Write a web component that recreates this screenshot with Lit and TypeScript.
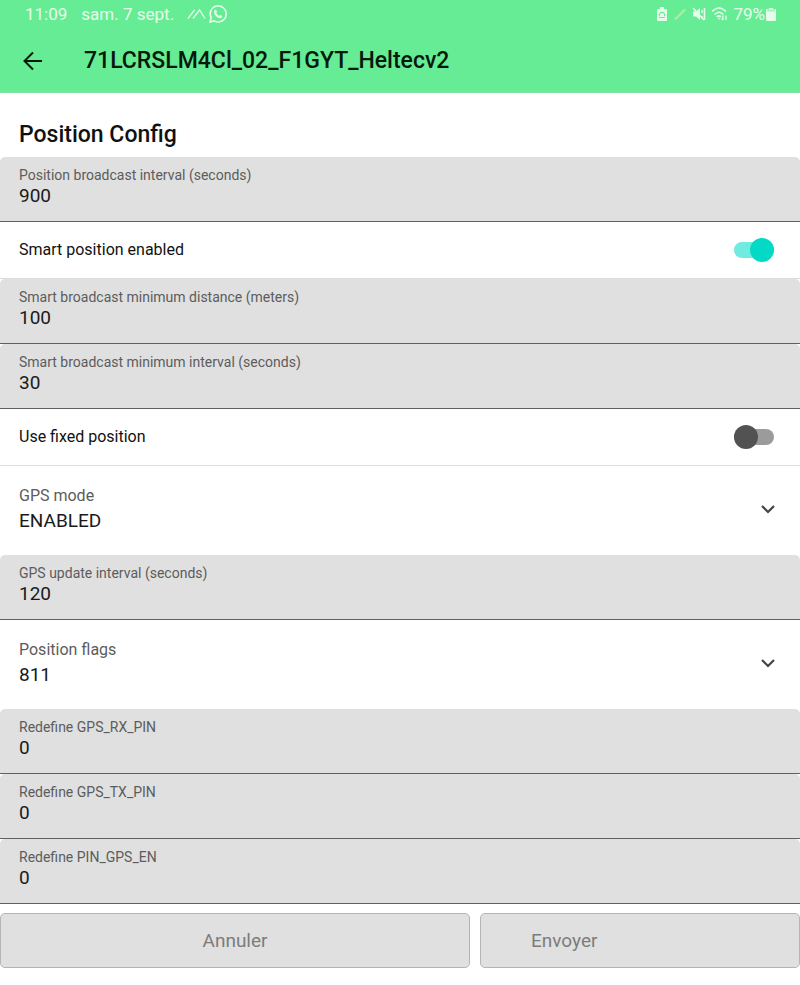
import { LitElement, html, css } from "lit";
import { customElement, property } from "lit/decorators.js";

const shared = css`
  * {
    box-sizing: border-box;
  }
  :host {
    display: block;
  }
  input,
  select,
  button {
    font: inherit;
    color: inherit;
    margin: 0;
    border-radius: 0;
  }
`;

@customElement("status-bar")
class StatusBar extends LitElement {
  static styles = [
    shared,
    css`
      .bar {
        display: flex;
        align-items: center;
        justify-content: space-between;
        height: 28px;
        padding: 0 24px 0 25px;
        font-size: 17px;
        line-height: 28px;
        color: #e6fceb;
      }
      .group {
        display: flex;
        align-items: center;
      }
      .date {
        margin: 0 13px 0 14px;
      }
      .right svg {
        margin-right: 5px;
      }
      .right .battery {
        margin: 0 0 0 1px;
      }
      svg {
        display: block;
      }
    `,
  ];
  render() {
    return html`
      <div class="bar">
        <div class="group">
          <span>11:09</span>
          <span class="date">sam. 7 sept.</span>
          <svg width="20" height="12" viewBox="0 0 20 12" fill="none" stroke="currentColor" stroke-width="1.3">
            <path d="M1 10.5 7.5 2M6 10.5 12.5 2 18 10.5" />
          </svg>
          <svg width="22" height="22" viewBox="0 0 22 22" fill="none" stroke="currentColor" stroke-width="1.6">
            <path d="M3 19 4.2 14.8A8 8 0 1 1 7.3 17.9Z" />
            <path
              d="M8 6.8 9.2 6.9 10 8.9 9.2 10Q10.2 12 12.2 12.9L13.2 11.9 15.2 12.9Q15.2 15 13 15.2 9.2 14.5 7.2 10.5 6.3 8 8 6.8Z"
              fill="currentColor"
              stroke="none"
            />
          </svg>
        </div>
        <div class="group right">
          <svg width="12" height="14" viewBox="0 0 12 14">
            <path d="M4 0H8V2H10Q11 2 11 3V13Q11 14 10 14H2Q1 14 1 13V3Q1 2 2 2H4Z" fill="currentColor" />
            <path d="M3.5 9A2.7 2.7 0 1 1 8.5 9M3 10.5H9" fill="none" stroke="#66ec95" stroke-width="1.2" />
          </svg>
          <svg width="14" height="14" viewBox="0 0 14 14">
            <path d="M2 12.5 12 2.5" stroke="#a8eea0" stroke-width="2.4" />
          </svg>
          <svg width="14" height="14" viewBox="0 0 14 14" fill="none" stroke="currentColor">
            <path d="M1 4.5H4L8 1V13L4 9.5H1Z" fill="currentColor" stroke="none" />
            <path d="M1 1 12 13M10 3V6M10 9V11M12.5 1V13" stroke-width="1.6" />
          </svg>
          <svg width="17" height="16" viewBox="0 0 17 16" fill="none" stroke="currentColor" stroke-width="1.6">
            <path d="M1 5.5Q8 -1.5 15 5.5M3.5 8.5Q8 4 12.5 8.5M5.7 11Q8 8.7 10 11" />
            <path d="M8 11.5V13.5M12 9.5V14M10.5 12.5 12 14M15 14V9.5" stroke-width="1.3" />
          </svg>
          <span>79%</span>
          <svg class="battery" width="10" height="13" viewBox="0 0 10 13">
            <path d="M3 0H7V1H9Q10 1 10 2V12Q10 13 9 13H1Q0 13 0 12V2Q0 1 1 1H3Z" fill="currentColor" />
            <path d="M1 2.5H9" stroke="#a7f3bf" stroke-width="2" />
          </svg>
        </div>
      </div>
    `;
  }
}

@customElement("text-field")
class TextField extends LitElement {
  @property() label = "";
  @property() value = "";
  static styles = [
    shared,
    css`
      .field {
        display: flex;
        flex-direction: column;
        height: 65px;
        padding: 8px 19px 0;
        background: #e0e0e0;
        border-bottom: 1px solid #606060;
        border-radius: 5px 5px 0 0;
      }
      label {
        font-size: 14px;
        line-height: 20px;
        color: #5c5c5c;
      }
      input {
        width: 100%;
        height: 22px;
        padding: 0;
        border: 0;
        outline: 0;
        background: none;
        font-size: 19px;
        line-height: 22px;
        color: #1a1a1a;
      }
    `,
  ];
  render() {
    return html`
      <div class="field">
        <label for="entry">${this.label}</label>
        <input id="entry" type="text" inputmode="numeric" .value=${this.value} />
      </div>
    `;
  }
}

@customElement("switch-row")
class SwitchRow extends LitElement {
  @property() label = "";
  @property({ type: Boolean }) on = false;
  static styles = [
    shared,
    css`
      :host {
        border-bottom: 1px solid #dcdcdc;
      }
      .row {
        display: flex;
        align-items: center;
        justify-content: space-between;
        height: 56px;
        padding: 0 26px 0 19px;
        font-size: 16px;
        line-height: 24px;
        color: #111;
      }
      .switch {
        display: grid;
        align-items: center;
        width: 40px;
        height: 24px;
      }
      .track,
      input {
        grid-area: 1 / 1;
      }
      .track {
        height: 16px;
        border-radius: 8px;
        background: #9b9b9b;
      }
      input {
        appearance: none;
        display: flex;
        align-items: center;
        width: 40px;
        height: 24px;
        border-radius: 12px;
      }
      input::before {
        content: "";
        width: 24px;
        height: 24px;
        border-radius: 50%;
        background: #525252;
      }
      input:checked {
        justify-content: flex-end;
      }
      input:checked::before {
        background: #03dac5;
      }
      :host([on]) .track {
        background: #70ebe0;
      }
    `,
  ];
  render() {
    return html`
      <div class="row">
        <label for="toggle">${this.label}</label>
        <div class="switch">
          <span class="track"></span>
          <input
            id="toggle"
            type="checkbox"
            role="switch"
            .checked=${this.on}
            @change=${(e: Event) => this.toggleAttribute("on", (e.target as HTMLInputElement).checked)}
          />
        </div>
      </div>
    `;
  }
}

@customElement("select-row")
class SelectRow extends LitElement {
  @property() label = "";
  @property() value = "";
  static styles = [
    shared,
    css`
      .row {
        display: grid;
        grid-template-columns: 1fr 24px;
        align-content: center;
        height: 89px;
        padding: 0 20px 3px 19px;
      }
      label {
        grid-area: 1 / 1;
        font-size: 16px;
        line-height: 24px;
        color: #5c5c5c;
      }
      select {
        grid-area: 2 / 1 / 3 / 3;
        appearance: none;
        height: 26px;
        padding: 0;
        border: 0;
        outline: 0;
        background: none;
        font-size: 19px;
        line-height: 26px;
        color: #1a1a1a;
      }
      svg {
        grid-area: 1 / 2 / 3 / 3;
        align-self: center;
        pointer-events: none;
      }
    `,
  ];
  render() {
    return html`
      <div class="row">
        <label for="choice">${this.label}</label>
        <select id="choice">
          <option>${this.value}</option>
        </select>
        <svg width="24" height="24" viewBox="0 0 24 24" fill="none" stroke="#444" stroke-width="2.2">
          <path d="M6 9 12 15 18 9" />
        </svg>
      </div>
    `;
  }
}

@customElement("app-root")
class AppRoot extends LitElement {
  static styles = [
    shared,
    css`
      :host {
        min-height: 100vh;
        background: #fff;
        font-family: Roboto, "Noto Sans", sans-serif;
      }
      header {
        background: #66ec95;
        border-bottom: 1px solid #7fe3a2;
      }
      .toolbar {
        display: flex;
        align-items: center;
        gap: 39px;
        height: 64px;
        padding: 2px 21px 0;
      }
      .back {
        display: flex;
        padding: 0;
        border: 0;
        background: none;
        color: #06190b;
      }
      h1,
      h2 {
        margin: 0;
        font-size: 23px;
        font-weight: 500;
        line-height: 32px;
      }
      h1 {
        color: #06190b;
      }
      h2 {
        padding: 26px 19px 6px;
        color: #111;
      }
      .actions {
        display: grid;
        grid-template-columns: 47fr 32fr;
        gap: 10px;
        padding-top: 9px;
      }
      .actions button {
        height: 55px;
        border: 1px solid #b4b4b4;
        border-radius: 5px;
        background: #e0e0e0;
        font-size: 19px;
        color: #7c7c7c;
      }
      .actions .send {
        padding: 0 50px;
        text-align: left;
      }
    `,
  ];
  render() {
    return html`
      <header>
        <status-bar></status-bar>
        <div class="toolbar">
          <button class="back" aria-label="Retour">
            <svg width="24" height="24" viewBox="0 0 24 24" fill="none" stroke="currentColor" stroke-width="2">
              <path d="M21 12H4M12 3.5 3.5 12 12 20.5" />
            </svg>
          </button>
          <h1>71LCRSLM4Cl_02_F1GYT_Heltecv2</h1>
        </div>
      </header>
      <main>
        <h2>Position Config</h2>
        <text-field label="Position broadcast interval (seconds)" value="900"></text-field>
        <switch-row label="Smart position enabled" on></switch-row>
        <text-field label="Smart broadcast minimum distance (meters)" value="100"></text-field>
        <text-field label="Smart broadcast minimum interval (seconds)" value="30"></text-field>
        <switch-row label="Use fixed position"></switch-row>
        <select-row label="GPS mode" value="ENABLED"></select-row>
        <text-field label="GPS update interval (seconds)" value="120"></text-field>
        <select-row label="Position flags" value="811"></select-row>
        <text-field label="Redefine GPS_RX_PIN" value="0"></text-field>
        <text-field label="Redefine GPS_TX_PIN" value="0"></text-field>
        <text-field label="Redefine PIN_GPS_EN" value="0"></text-field>
        <div class="actions">
          <button>Annuler</button>
          <button class="send">Envoyer</button>
        </div>
      </main>
    `;
  }
}
